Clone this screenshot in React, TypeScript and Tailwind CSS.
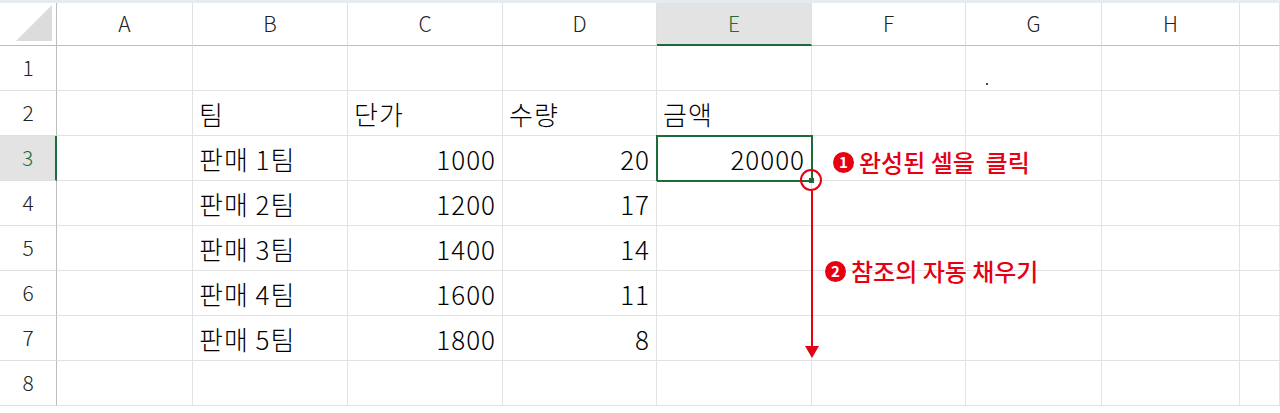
export default function App() {
  const cols = ["A", "B", "C", "D", "E", "F", "G", "H", ""];
  const widths = [136, 155, 155, 154, 155, 154, 136, 138, 40];
  const data: string[][] = [
    ["", "", "", "", "", "", "", "", ""],
    ["", "팀", "단가", "수량", "금액", "", "", "", ""],
    ["", "판매 1팀", "1000", "20", "20000", "", "", "", ""],
    ["", "판매 2팀", "1200", "17", "", "", "", "", ""],
    ["", "판매 3팀", "1400", "14", "", "", "", "", ""],
    ["", "판매 4팀", "1600", "11", "", "", "", "", ""],
    ["", "판매 5팀", "1800", "8", "", "", "", "", ""],
    ["", "", "", "", "", "", "", "", ""],
  ];
  const tmpl = "57px " + widths.map((w) => w + "px").join(" ");
  const numeric = (c: number) => c >= 2;
  return (
    <div className="relative w-[1280px] h-[413px] overflow-hidden bg-white" style={{ fontFamily: '"Noto Sans CJK KR", "Noto Sans", sans-serif' }}>
      <div className="h-[3px] bg-[#e6ebf0]" />
      <div className="grid" style={{ gridTemplateColumns: tmpl }}>
        <div className="h-[43px] border-r border-b border-[#bdbdbd] bg-white relative">
          <div className="absolute right-[4px] bottom-[4px] w-0 h-0 border-l-[36px] border-l-transparent border-b-[36px] border-b-[#dcdcdc]" />
        </div>
        {cols.map((c, i) => (
          <div key={i} className={`h-[43px] flex items-center justify-center text-[21px] font-light border-r border-[#e0e0e0] ${i === 4 ? "bg-[#e3e3e3] text-[#1e6b3a] border-b-2 border-b-[#1e6b3a]" : "border-b border-b-[#bdbdbd] text-[#222]"}`}>{c}</div>
        ))}
        {data.map((row, r) => (
          <>
            <div key={"h" + r} className={`h-[45px] flex items-center justify-center text-[21px] font-light border-b border-[#e0e0e0] ${r === 2 ? "bg-[#e3e3e3] text-[#1e6b3a] border-r-2 border-r-[#1e6b3a]" : "border-r border-r-[#bdbdbd] text-[#222]"}`}>{r + 1}</div>
            {row.map((v, c) => (
              <div key={r + "-" + c} className={`h-[45px] flex items-center px-[6px] text-[26px] font-light tracking-[1px] whitespace-pre text-black border-r border-b border-[#e2e2e2] ${numeric(c) && r >= 2 ? "justify-end" : "justify-start"} ${r === 2 && c === 4 ? "outline-2 outline-[#1e6b3a] -outline-offset-1" : ""}`}>{v}</div>
            ))}
          </>
        ))}
      </div>
      <div className="absolute left-[809px] top-[178px] w-[5px] h-[5px] bg-[#1e6b3a]" />
      <div className="absolute left-[800px] top-[169px] w-[22px] h-[22px] rounded-full border-2 border-[#e60012]" />
      <div className="absolute left-[811px] top-[191px] w-[2px] h-[157px] bg-[#e60012]" />
      <div className="absolute left-[805px] top-[346px] w-0 h-0 border-l-[7px] border-r-[7px] border-t-[12px] border-l-transparent border-r-transparent border-t-[#e60012]" />
      <div className="absolute left-[833px] top-[144px] flex items-center gap-[5px] text-[24px] font-medium text-[#e60012]">
        <span className="w-[21px] h-[21px] rounded-full bg-[#e60012] text-white text-[15px] flex items-center justify-center font-bold">1</span>
        <span className="whitespace-pre">완성된 셀을  클릭</span>
      </div>
      <div className="absolute left-[825px] top-[253px] flex items-center gap-[5px] text-[24px] font-medium text-[#e60012]">
        <span className="w-[21px] h-[21px] rounded-full bg-[#e60012] text-white text-[15px] flex items-center justify-center font-bold">2</span>
        <span>참조의 자동 채우기</span>
      </div>
      <div className="absolute left-[986px] top-[83px] w-[2px] h-[2px] bg-[#444]" />
    </div>
  );
}
